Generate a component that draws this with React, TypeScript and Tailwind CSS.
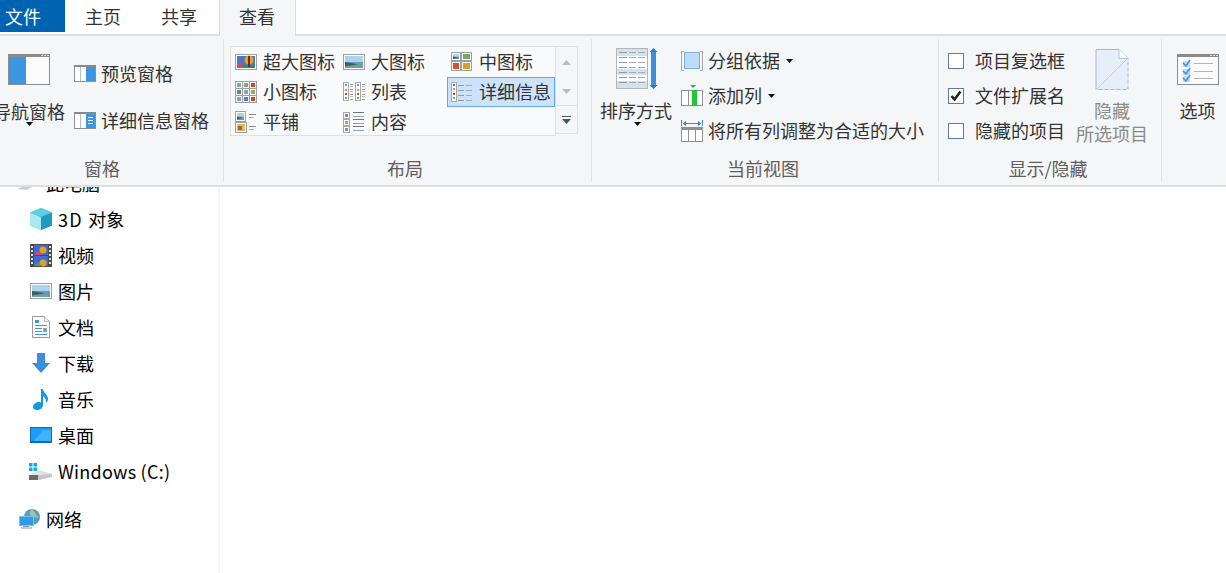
import React from "react";

const Landscape = ({ x, y, w, h }: { x: number; y: number; w: number; h: number }) => (
  <g>
    <rect x={x + 0.5} y={y + 0.5} width={w - 1} height={h - 1} fill="#fff" stroke="#a0a0a0" />
    <rect x={x + 2} y={y + 2} width={w - 4} height={(h - 4) / 2} fill="#a9d3ee" />
    <rect x={x + 2} y={y + 2 + (h - 4) / 2} width={w - 4} height={(h - 4) / 2} fill="#6f9cb0" />
    <path d={`M${x + 2} ${y + h / 2} L${x + w * 0.7} ${y + h * 0.64} L${x + 2} ${y + h * 0.78}Z`} fill="#3c6350" />
  </g>
);
const Mini = ({ x, y, c }: { x: number; y: number; c: string }) => (
  <g>
    <rect x={x + 0.5} y={y + 0.5} width="6" height="6" fill="#fff" stroke="#a8a8a8" />
    <rect x={x + 2} y={y + 2} width="3" height="3" fill={c} />
  </g>
);
const Lines = ({ x, y, w, n, gap, c = "#9a9a9a" }: { x: number; y: number; w: number; n: number; gap: number; c?: string }) => (
  <g>
    {Array.from({ length: n }).map((_, i) => (
      <rect key={i} x={x} y={y + i * gap} width={w} height="1" fill={c} />
    ))}
  </g>
);
const S = ({ w = 22, h = 22, children }: { w?: number; h?: number; children: React.ReactNode }) => (
  <svg width={w} height={h} viewBox={`0 0 ${w} ${h}`} className="shrink-0 block">
    {children}
  </svg>
);

const IconXL = () => (
  <S>
    <rect x="0.5" y="3.5" width="21" height="15" fill="#fff" stroke="#a0a0a0" />
    <rect x="2" y="5" width="18" height="12" fill="#4a78c8" />
    <rect x="2" y="14" width="18" height="3" fill="#3f8a4a" />
    <path d="M2 17l3-7 3 7z" fill="#d8475a" />
    <circle cx="14" cy="9" r="4.500" fill="#e7a21f" />
    <rect x="13" y="5" width="2" height="8" fill="#7a2a1c" />
    <rect x="13" y="13" width="2" height="3" fill="#5a3a1a" />
  </S>
);
const IconL = () => <S><Landscape x={0} y={3} w={22} h={16} /></S>;
const IconM = () => (
  <S>
    <Landscape x={0} y={1} w={10} h={9} />
    <rect x="10.500" y="1.500" width="10" height="8" fill="#fff" stroke="#a0a0a0" />
    <rect x="12" y="3" width="7" height="5" fill="#7fa85a" />
    <rect x="0.500" y="10.500" width="9" height="9" fill="#fff" stroke="#a0a0a0" />
    <rect x="2" y="12" width="6" height="6" fill="#d9502f" />
    <rect x="10.500" y="10.500" width="10" height="9" fill="#fff" stroke="#a0a0a0" />
    <rect x="12" y="12" width="7" height="6" fill="#d8a02a" />
  </S>
);
const IconS = () => (
  <S>
    {[0, 7, 14].map((x, i) =>
      [0, 7, 14].map((y, j) => (
        <g key={`${i}${j}`}>
          <rect x={x + 0.5} y={y + 0.5} width="7" height="7" fill="#fff" stroke="#a0a0a0" />
          <rect x={x + 2} y={y + 2} width="4" height="4" fill={["#7fa6c4", "#6b8c5a", "#7fa6c4", "#8aa860", "#7fa6c4", "#5a7ac8", "#d8402a", "#9aa860", "#d8402a"][i * 3 + j]} />
        </g>
      ))
    )}
  </S>
);
const IconList = () => (
  <S>
    {[0, 12].map((x) => (
      <g key={x}>
        <rect x={x + 0.5} y="1.500" width="5" height="18" fill="#fff" stroke="#a8a8a8" />
        <rect x={x + 2} y="3" width="2" height="2" fill="#6d93b5" />
        <rect x={x + 2} y="8" width="2" height="2" fill="#c8a040" />
        <rect x={x + 2} y="12" width="2" height="2" fill="#d8402a" />
        <rect x={x + 2} y="16" width="2" height="2" fill="#8aa860" />
        <Lines x={x + 7} y={3} w={3} n={4} gap={5} />
        <Lines x={x + 7} y={5} w={3} n={3} gap={5} c="#c0c0c0" />
      </g>
    ))}
  </S>
);
const IconTile = () => (
  <S>
    <Landscape x={0} y={0} w={11} h={11} />
    <rect x="0.500" y="11.500" width="11" height="10" fill="#fff" stroke="#a0a0a0" />
    <rect x="2" y="13" width="8" height="7" fill="#d8c060" />
    <rect x="3" y="15" width="4" height="4" fill="#c85a2a" />
    <Lines x={14} y={3} w={7} n={1} gap={3} c="#888" />
    <Lines x={14} y={6} w={5} n={1} gap={3} c="#b0b0b0" />
    <Lines x={14} y={15} w={7} n={1} gap={3} c="#888" />
    <Lines x={14} y={18} w={5} n={1} gap={3} c="#b0b0b0" />
  </S>
);
const IconDetails = () => (
  <S>
    <rect x="0.500" y="1.500" width="5" height="19" fill="#fff" stroke="#a8a8a8" />
    <rect x="2" y="3" width="2" height="2" fill="#5a7a9a" />
    <rect x="2" y="7" width="2" height="2" fill="#c89a30" />
    <rect x="2" y="12" width="2" height="2" fill="#d8402a" />
    <rect x="2" y="16" width="2" height="2" fill="#8aa860" />
    <Lines x={7} y={4} w={6} n={4} gap={5} c="#999" />
    <Lines x={15} y={4} w={6} n={4} gap={5} c="#aaa" />
  </S>
);
const IconContent = () => (
  <S>
    {[1, 8, 15].map((y, i) => (
      <g key={y}>
        <Mini x={0} y={y} c={["#6d93b5", "#c8a040", "#6d93b5"][i]} />
        <rect x="10" y={y} width="11" height="1" fill="#777" />
        <rect x="10" y={y + 4} width="11" height="1" fill="#7aa7dc" />
      </g>
    ))}
  </S>
);

const Tri = ({ c = "#111" }: { c?: string }) => (
  <svg width="7" height="4" viewBox="0 0 7 4" className="shrink-0 block">
    <path d="M0 0h7L3.500 4z" fill={c} />
  </svg>
);

const GalleryItem = ({ icon, label, selected }: { icon: React.ReactNode; label: string; selected?: boolean }) => (
  <div className={`h-[30px] flex items-center text-[18px] text-[#333] whitespace-nowrap gap-[6px] ${selected ? "bg-[#cce4fb] border border-[#63a8e3] pl-[3px]" : "pl-[4px]"}`}>
    {icon}
    <span className="leading-[28px] mb-[2px]">{label}</span>
  </div>
);

const Check = ({ checked }: { checked?: boolean }) => (
  <div className="w-[16px] h-[16px] border border-[#5d7ba8] bg-white flex items-center justify-center shrink-0">
    {checked && (
      <svg width="12" height="12" viewBox="0 0 12 12">
        <path d="M1.500 6l3 3.500 6-8" fill="none" stroke="#222" strokeWidth="2.600" />
      </svg>
    )}
  </div>
);

const Row = ({ icon, label }: { icon: React.ReactNode; label: React.ReactNode }) => (
  <div className="h-[36px] flex items-center gap-[6px] pl-[29px] text-[18px] text-black leading-[36px] whitespace-nowrap">
    <div className="w-[23px] flex justify-center">{icon}</div>
    <span>{label}</span>
  </div>
);

const GroupLabel = ({ children, className = "" }: { children: React.ReactNode; className?: string }) => (
  <div className={`h-[28px] shrink-0 flex items-center justify-center text-[18px] leading-[28px] text-[#5e5e5e] whitespace-nowrap ${className}`}>{children}</div>
);

const group = "shrink-0 border-r border-[#e2e3e4] flex flex-col mt-[3px] h-[143px] pt-[1px]";

export default function App() {
  return (
    <div className="w-[1226px] h-[573px] overflow-hidden bg-white flex flex-col" style={{ fontFamily: '"Noto Sans CJK SC", "Noto Sans", sans-serif' }}>
      {/* Tabs */}
      <div className="h-[36px] shrink-0 flex border-b-2 border-[#dedede] text-[18px] text-[#333]">
        <div className="w-[65px] h-[32px] bg-[#0063b1] text-white pl-[5px] leading-[32px]">文件</div>
        <div className="pl-[20px] w-[77px] leading-[32px]">主页</div>
        <div className="pl-[19px] w-[77px] leading-[32px]">共享</div>
        <div className="w-[77px] h-[36px] bg-[#f5f6f7] border-x border-[#dedede] pl-[19px] leading-[32px]">查看</div>
      </div>
      {/* Ribbon */}
      <div className="h-[151px] shrink-0 bg-[#f5f6f7] border-b-2 border-[#dedede] flex overflow-hidden">
        {/* 窗格 */}
        <div className={`w-[224px] ${group}`}>
          <div className="h-[112px] shrink-0 flex overflow-hidden">
            <div className="w-[72px] ml-[-7px] shrink-0 flex flex-col items-center pt-[14px]">
              <svg width="42" height="32" viewBox="0 0 42 32" className="block">
                <rect x="0.500" y="0.500" width="41" height="30" fill="#fbfbfb" stroke="#8e8e8e" />
                <rect x="0" y="0" width="42" height="3" fill="#8a8a8a" />
                <rect x="33" y="1" width="2" height="1" fill="#ddd" />
                <rect x="36" y="1" width="2" height="1" fill="#ddd" />
                <rect x="39" y="1" width="2" height="1" fill="#ddd" />
                <rect x="1" y="3" width="17" height="27" fill="#3f96e0" />
              </svg>
              <div className="text-[18px] text-[#333] leading-[26px] mt-[12px] whitespace-nowrap">导航窗格</div>
              <div className="mt-[-2px]"><Tri /></div>
            </div>
            <div className="ml-[9px] flex flex-col pt-[18px] gap-[17px] text-[18px] text-[#333]">
              <div className="h-[30px] flex items-center gap-[5px] whitespace-nowrap">
                <svg width="22" height="17" viewBox="0 0 22 17"><rect x="0.500" y="0.500" width="21" height="16" fill="#fff" stroke="#8e8e8e" /><rect x="0" y="0" width="22" height="2" fill="#8a8a8a" /><rect x="6" y="2" width="1" height="14" fill="#bbb" /><rect x="12" y="2" width="9" height="14" fill="#3f96e0" /></svg>
                预览窗格
              </div>
              <div className="h-[30px] flex items-center gap-[5px] whitespace-nowrap">
                <svg width="22" height="17" viewBox="0 0 22 17"><rect x="0.500" y="0.500" width="21" height="16" fill="#fff" stroke="#8e8e8e" /><rect x="0" y="0" width="22" height="2" fill="#8a8a8a" /><rect x="6" y="2" width="1" height="14" fill="#bbb" /><rect x="12" y="2" width="9" height="14" fill="#3f96e0" /><rect x="14" y="5" width="5" height="1" fill="#fff" /><rect x="14" y="8" width="5" height="1" fill="#fff" /><rect x="14" y="11" width="5" height="1" fill="#fff" /></svg>
                详细信息窗格
              </div>
            </div>
          </div>
          <GroupLabel className="mt-[2px] w-[204px]">窗格</GroupLabel>
        </div>
        {/* 布局 */}
        <div className={`w-[368px] ${group}`}>
          <div className="h-[112px] shrink-0 pl-[6px] pt-[6px]">
            <div className="flex h-[90px] w-[348px]">
              <div className="w-[326px] h-[90px] bg-[#f9fafb] border border-[#dfe0e1] grid grid-cols-[108px_108px_108px] grid-rows-[30px_30px_30px]">
                <GalleryItem icon={<IconXL />} label="超大图标" />
                <GalleryItem icon={<IconL />} label="大图标" />
                <GalleryItem icon={<IconM />} label="中图标" />
                <GalleryItem icon={<IconS />} label="小图标" />
                <GalleryItem icon={<IconList />} label="列表" />
                <GalleryItem icon={<IconDetails />} label="详细信息" selected />
                <GalleryItem icon={<IconTile />} label="平铺" />
                <GalleryItem icon={<IconContent />} label="内容" />
              </div>
              <div className="w-[22px] h-[88px] border border-l-0 border-[#dfe0e1] flex flex-col items-center justify-between bg-[#f5f6f7]">
                <div className="h-[30px] flex items-center justify-center"><svg width="9" height="5" viewBox="0 0 9 5"><path d="M0 5h9L4.500 0z" fill="#b4bcc6" /></svg></div>
                <div className="h-[28px] flex items-center justify-center"><svg width="9" height="5" viewBox="0 0 9 5"><path d="M0 0h9L4.500 5z" fill="#b4bcc6" /></svg></div>
                <div className="h-[28px] w-full border-t border-[#dfe0e1] flex items-center justify-center"><svg width="9" height="8" viewBox="0 0 9 8"><rect width="9" height="1" fill="#44546a" /><path d="M0 3h9L4.500 8z" fill="#44546a" /></svg></div>
              </div>
            </div>
          </div>
          <GroupLabel className="mt-[2px] w-[362px]">布局</GroupLabel>
        </div>
        {/* 当前视图 */}
        <div className={`w-[347px] ${group}`}>
          <div className="h-[112px] shrink-0 flex">
            <div className="w-[72px] ml-[8px] shrink-0 flex flex-col items-center pt-[8px]">
              <svg width="42" height="42" viewBox="0 0 42 42" className="block ml-[2px]">
                <rect x="0.500" y="0.500" width="31" height="40" fill="#fff" stroke="#b5b5b5" />
                <rect x="1" y="1" width="30" height="7" fill="#cfe4f2" />
                <rect x="1" y="21" width="30" height="6" fill="#cfe4f2" />
                <rect x="1" y="33" width="30" height="7" fill="#cfe4f2" />
                {[4, 9, 14, 19, 24, 29, 34].map((y) => (
                  <g key={y}>
                    <rect x="3" y={y} width="8" height="1" fill="#9a9a9a" />
                    <rect x="13" y={y} width="7" height="1" fill="#a8a8a8" />
                    <rect x="22" y={y} width="7" height="1" fill="#a8a8a8" />
                  </g>
                ))}
                <rect x="35" y="3" width="5" height="36" fill="#3d8fdc" />
                <path d="M33.500 4L37.500 0l4 4zM33.500 37l4 4 4-4z" fill="#2a7cc8" />
              </svg>
              <div className="text-[18px] text-[#333] leading-[26px] mt-[7px] whitespace-nowrap">排序方式</div>
              <div className="mt-[-1px] ml-[2px]"><Tri /></div>
            </div>
            <div className="ml-[9px] flex flex-col pt-[6px] gap-[5px] text-[18px] text-[#333] whitespace-nowrap">
              <div className="h-[30px] flex items-center gap-[5px]">
                <svg width="22" height="22" viewBox="0 0 22 22" className="block"><path d="M3 1.500H0.500v19H3M19 1.500h2.500v19H19" fill="none" stroke="#a8a8a8" /><rect x="3.500" y="2.500" width="15" height="16" fill="#bcdcf8" stroke="#7fb0dc" /></svg>
                <span className="mb-[2px]">分组依据</span>
                <span className="ml-[1px]"><Tri /></span>
              </div>
              <div className="h-[30px] flex items-center gap-[5px]">
                <svg width="22" height="22" viewBox="0 0 22 22" className="block"><path d="M9 0h6l-3 3z" fill="#3d8fdc" /><rect x="0.500" y="5.500" width="21" height="15" fill="#fff" stroke="#909090" /><rect x="7" y="6" width="1" height="14" fill="#909090" /><rect x="11" y="5" width="5" height="16" fill="#1fc733" /></svg>
                <span className="mb-[2px]">添加列</span>
                <span className="ml-[1px]"><Tri /></span>
              </div>
              <div className="h-[30px] flex items-center gap-[5px]">
                <svg width="22" height="22" viewBox="0 0 22 22" className="block"><rect x="0" y="0" width="1" height="6" fill="#3d8fdc" /><rect x="21" y="0" width="1" height="6" fill="#3d8fdc" /><rect x="3" y="3" width="16" height="1" fill="#3d8fdc" /><path d="M5 1v5L2 3.500zM17 1v5l3-2.500z" fill="#2a7cc8" /><rect x="0.500" y="7.500" width="21" height="14" fill="#fff" stroke="#909090" /><rect x="0" y="7" width="22" height="3" fill="#909090" /><rect x="7" y="10" width="1" height="11" fill="#909090" /><rect x="14" y="10" width="1" height="11" fill="#909090" /></svg>
                <span className="mb-[2px]">将所有列调整为合适的大小</span>
              </div>
            </div>
          </div>
          <GroupLabel className="mt-[2px] w-[342px]">当前视图</GroupLabel>
        </div>
        {/* 显示/隐藏 */}
        <div className={`w-[223px] ${group}`}>
          <div className="h-[112px] shrink-0 flex">
            <div className="pl-[9px] pt-[6px] flex flex-col gap-[5px] w-[137px] shrink-0 text-[18px] text-[#333] whitespace-nowrap">
              <div className="h-[30px] flex items-center gap-[11px]"><Check /><span className="mb-[2px]">项目复选框</span></div>
              <div className="h-[30px] flex items-center gap-[11px]"><Check checked /><span className="mb-[2px]">文件扩展名</span></div>
              <div className="h-[30px] flex items-center gap-[11px]"><Check /><span className="mb-[2px]">隐藏的项目</span></div>
            </div>
            <div className="flex flex-col items-center pt-[9px] w-[72px] shrink-0 text-[18px] text-[#8a8a8a]">
              <svg width="34" height="42" viewBox="0 0 34 42" className="block">
                <path d="M1 0.500h23l9 9v31H1z" fill="#e6eefa" />
                <path d="M1 41V0.500h23L33 9.500v31H1" fill="none" stroke="#a8b8d0" />
                <path d="M24 .5v9h9" fill="#fff" stroke="#b8c4d8" />
                <path d="M1 41L33 9" stroke="#c0cce0" fill="none" />
                <path d="M33 10v31H2" stroke="#f5f6f7" strokeWidth="1.200" strokeDasharray="3 3" fill="none" />
              </svg>
              <div className="leading-[22px] mt-[8px]">隐藏</div>
              <div className="leading-[22px] mt-[1px] whitespace-nowrap">所选项目</div>
            </div>
          </div>
          <GroupLabel className="mt-[2px] w-[218px]">显示/隐藏</GroupLabel>
        </div>
        {/* 选项 */}
        <div className="flex-1 flex flex-col items-center pt-[18px] pl-[7px]">
          <svg width="42" height="32" viewBox="0 0 42 32" className="block">
            <rect x="0.500" y="0.500" width="41" height="30" fill="#fbfbfb" stroke="#8e8e8e" />
            <rect x="0" y="0" width="42" height="3" fill="#8a8a8a" />
            <rect x="33" y="1" width="2" height="1" fill="#ddd" />
            <rect x="36" y="1" width="2" height="1" fill="#ddd" />
            <rect x="39" y="1" width="2" height="1" fill="#ddd" />
            {[7, 15, 22].map((y) => (
              <g key={y}>
                <rect x="6" y={y} width="7" height="6" fill="#c0dcf4" />
                <path d={`M6 ${y + 2}l3 3 4-6`} fill="none" stroke="#3d96e0" strokeWidth="1.600" />
                <rect x="17" y={y + 2} width="19" height="1" fill="#b5b5b5" />
              </g>
            ))}
          </svg>
          <div className="text-[18px] text-[#333] leading-[26px] mt-[11px]">选项</div>
        </div>
      </div>
      {/* Body */}
      <div className="flex-1 flex overflow-hidden">
        <div className="w-[220px] shrink-0 border-r-2 border-[#f5f5f5] overflow-hidden">
          <div className="mt-[-20px] h-[33px] flex items-center gap-[3px] pl-[17px] text-[18px] text-black whitespace-nowrap">
            <svg width="24" height="22" viewBox="0 0 24 22" className="block"><rect x="8" y="3" width="14" height="8" fill="#9ab8d0" /><path d="M0 16l12-5h8l-10 6z" fill="#c8ced4" /></svg>
            <span className="ml-[2px]">此电脑</span>
          </div>
          <div className="pt-[1px]">
            <Row label={<><span className="tracking-[1.300px]">3D </span>对象</>} icon={
              <svg width="22" height="22" viewBox="0 0 22 22"><path d="M11 0l11 4.500v13L11 22 0 17.500v-13z" fill="#2bb4cf" /><path d="M0 4.500L11 9v13L0 17.500z" fill="#a8e8ee" /><path d="M11 0l11 4.500L11 9 0 4.500z" fill="#5ccfe0" /><path d="M11 9l11-4.500v13L11 22z" fill="#1d9cc0" /></svg>
            } />
            <Row label="视频" icon={
              <svg width="22" height="23" viewBox="0 0 22 23"><rect width="22" height="23" fill="#4a4a4a" /><rect x="4" y="1" width="14" height="10" fill="#3f68d8" /><rect x="4" y="12" width="14" height="10" fill="#3f68d8" /><circle cx="13" cy="6" r="3.500" fill="#e0a020" /><path d="M4 11l4-4 4 4z" fill="#d84a6a" /><circle cx="13" cy="19" r="3.500" fill="#e0a020" /><path d="M4 22l4-4 4 4z" fill="#50a050" />{[2, 6, 10, 14, 18].map((y) => (<g key={y}><rect x="1" y={y} width="2" height="2" fill="#ddd" /><rect x="19" y={y} width="2" height="2" fill="#ddd" /></g>))}</svg>
            } />
            <Row label="图片" icon={<svg width="22" height="16" viewBox="0 0 22 16"><Landscape x={0} y={0} w={22} h={16} /></svg>} />
            <Row label="文档" icon={
              <svg width="18" height="22" viewBox="0 0 18 22"><path d="M.5.5h12l5 5v16H.5z" fill="#fff" stroke="#999" /><path d="M12.500.5v5h5" fill="#eee" stroke="#bbb" /><rect x="3" y="4" width="4" height="3" fill="#3d96e0" /><rect x="3" y="9" width="12" height="1" fill="#3d96e0" /><rect x="3" y="12" width="7" height="1" fill="#3d96e0" /><rect x="11" y="12" width="4" height="4" fill="#8aa0b0" /><rect x="3" y="15" width="7" height="1" fill="#3d96e0" /><rect x="3" y="18" width="12" height="1" fill="#3d96e0" /></svg>
            } />
            <Row label="下载" icon={
              <svg width="18" height="20" viewBox="0 0 18 20"><path d="M5 0h8v10h5l-9 10-9-10h5z" fill="#3d8fdc" /></svg>
            } />
            <Row label="音乐" icon={
              <svg width="16" height="22" viewBox="0 0 16 22"><path d="M8 1h2c0 4 5 5 5 10 0 2-1 3-2 4 .5-3-1-6-3-6.500V17c0 3-3 5-6 5s-4-1.500-4-3c0-3 3-5 6-5 1 0 1.500.2 2 .5z" fill="#0f9ae8" /></svg>
            } />
            <Row label="桌面" icon={
              <svg width="22" height="16" viewBox="0 0 22 16"><rect width="22" height="16" fill="#0b6cc4" /><rect x="1" y="1" width="20" height="13" fill="#1d9bf8" /><path d="M4 14L13 3h8v11z" fill="#3fb2fb" /></svg>
            } />
            <Row label={<span className="tracking-[0.250px]">Windows (C:)</span>} icon={
              <svg width="23" height="17" viewBox="0 0 23 17"><rect x="0" y="0" width="3.500" height="3.500" fill="#12a8f0" /><rect x="4.500" y="0" width="3.500" height="3.500" fill="#12a8f0" /><rect x="0" y="4.500" width="3.500" height="3.500" fill="#12a8f0" /><rect x="4.500" y="4.500" width="3.500" height="3.500" fill="#12a8f0" /><path d="M0 12l11-5 12 4v3L9 17H0z" fill="#e2e2e2" /><path d="M0 12h9v5H0z" fill="#6a6a6a" /><path d="M9 12l14-1v3L9 17z" fill="#c8c8c8" /></svg>
            } />
          </div>
          <div className="mt-[12px] h-[36px] flex items-center gap-[5px] pl-[19px] text-[18px] text-black">
            <svg width="22" height="22" viewBox="0 0 22 22" className="block"><circle cx="13" cy="9" r="8" fill="#5a9ac0" /><path d="M13 1c-2 2-3 5-1 7s6 1 8 2" fill="#9ac8a8" /><rect x="0.500" y="8.500" width="14" height="9" fill="#2d9de8" stroke="#7ac0f0" /><rect x="4" y="18" width="6" height="1" fill="#9a9a9a" /><rect x="2" y="19" width="11" height="2" fill="#c8c8c8" /></svg>
            <span>网络</span>
          </div>
        </div>
        <div className="flex-1 bg-white" />
      </div>
    </div>
  );
}
